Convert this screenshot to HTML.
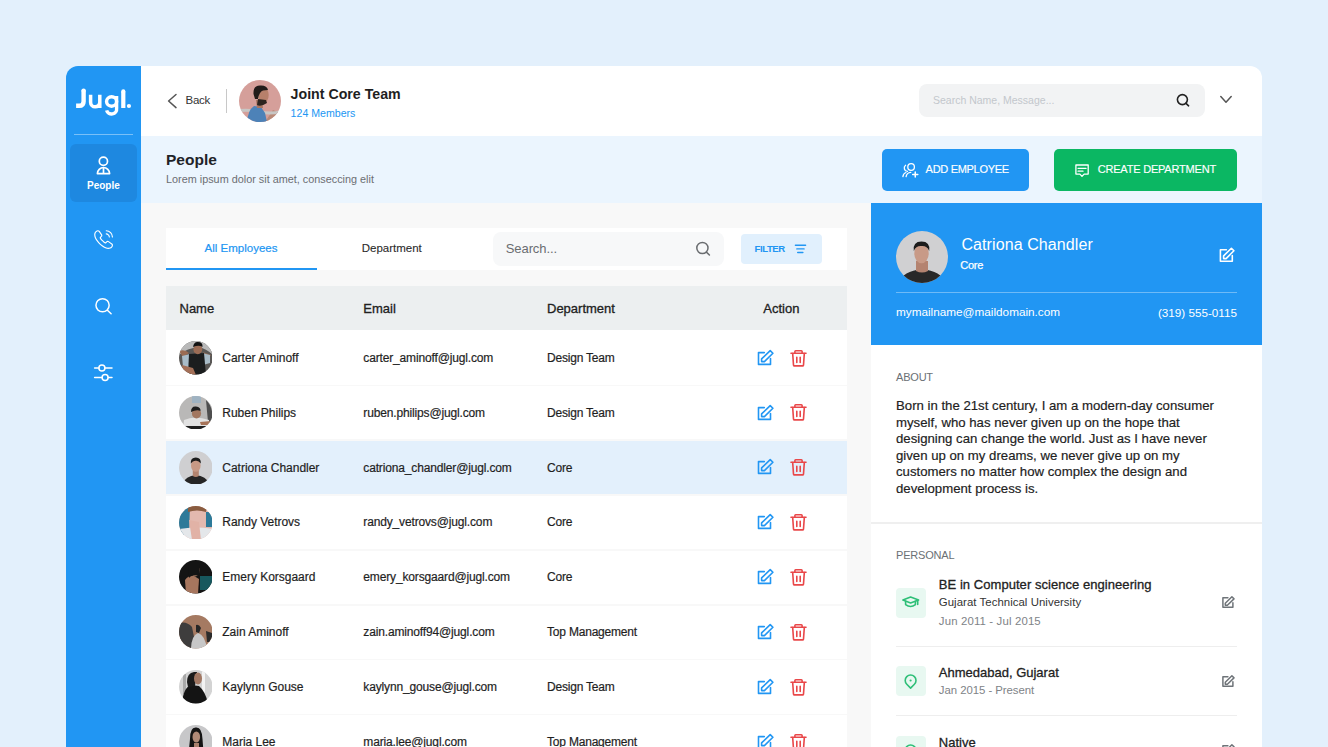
<!DOCTYPE html>
<html><head><meta charset="utf-8"><title>Jugl People</title>
<style>
html,body{margin:0;padding:0;}
body{width:1328px;height:747px;overflow:hidden;position:relative;background:#E3F0FC;font-family:"Liberation Sans", sans-serif;}
.t{position:absolute;white-space:nowrap;}
svg{display:block;}
</style></head><body>
<div style="position:absolute;left:66px;top:66px;width:75px;height:700px;background:#2196F3;border-radius:12px 0 0 0;"></div>
<div style="position:absolute;left:141px;top:66px;width:1121px;height:70px;background:#FFFFFF;border-radius:0 12px 0 0;"></div>
<div style="position:absolute;left:141px;top:136px;width:1121px;height:67px;background:#EBF5FE;"></div>
<div style="position:absolute;left:141px;top:203px;width:730px;height:560px;background:#F8F8F8;"></div>
<div style="position:absolute;left:871px;top:203px;width:391px;height:560px;background:#FFFFFF;"></div>
<div style="position:absolute;left:871px;top:203px;width:391px;height:142px;background:#2196F3;"></div>
<svg style="position:absolute;left:72px;top:82px;" width="64" height="36" viewBox="0 0 64 36" fill="none"><g stroke="#fff" fill="none">
<path d="M11.6 8.4 V19.4 Q11.6 23.8 7.2 23.8 H4.1" stroke-width="4.4" stroke-linecap="butt"/>
<circle cx="11.6" cy="8.6" r="2.2" fill="#fff" stroke="none"/>
<path d="M18.6 12.8 V20.2 A4.6 4.6 0 0 0 27.8 20.2 M27.8 12.8 V26" stroke-width="3.5" stroke-linecap="butt"/>
<ellipse cx="39.6" cy="19.5" rx="5.05" ry="4.7" stroke-width="3.4"/>
<path d="M44.6 14 V26.6 A5.1 4.7 0 0 1 34.6 28.4" stroke-width="3.4" stroke-linecap="butt"/>
<path d="M51.3 9.6 V26" stroke-width="4.2" stroke-linecap="butt"/>
<circle cx="51.3" cy="9.4" r="2.1" fill="#fff" stroke="none"/>
</g><circle cx="56.95" cy="24.0" r="2.1" fill="#fff"/></svg>
<div style="position:absolute;left:74px;top:134px;width:59px;height:1px;background:rgba(255,255,255,0.4);"></div>
<div style="position:absolute;left:70px;top:144px;width:67px;height:58px;background:#1E88E0;border-radius:6px;"></div>
<svg style="position:absolute;left:95px;top:154px;" width="17" height="22" viewBox="0 0 17 22" fill="none"><g stroke="#fff" stroke-width="1.7" fill="none">
<circle cx="8.4" cy="7.2" r="4.1"/>
<path d="M2.4 19.6 A6.1 6.1 0 0 1 14.6 19.6 Z" stroke-linejoin="round"/>
<path d="M8.5 13.8 V19.6"/></g></svg>
<div class="t" style="left:-96.6px;width:400px;text-align:center;top:180.84px;font-size:10px;line-height:10px;color:#FFFFFF;font-weight:700;">People</div>
<svg style="position:absolute;left:92.6px;top:229.2px;" width="21.2" height="21.2" viewBox="0 0 24 24" fill="none"><g stroke="#fff" stroke-width="1.3" fill="none" stroke-linecap="round">
<path d="M21.97 18.33c0 .36-.08.73-.25 1.09-.17.36-.39.7-.68 1.02-.49.54-1.030.93-1.64 1.18-.6.25-1.25.38-1.95.38-1.02 0-2.11-.24-3.26-.73s-2.3-1.15-3.44-1.98a28.75 28.75 0 0 1-3.28-2.8 28.414 28.414 0 0 1-2.79-3.27c-.82-1.14-1.48-2.28-1.96-3.41C2.240 8.670 2 7.58 2 6.54c0-.68.12-1.33.36-1.93.24-.61.62-1.17 1.15-1.67C4.15 2.31 4.85 2 5.59 2c.28 0 .56.06.81.18.26.12.49.3.67.56l2.32 3.27c.18.25.31.48.4.7.09.21.14.42.14.61 0 .24-.07.48-.21.71-.13.23-.32.47-.56.71l-.76.79c-.11.11-.16.24-.16.4 0 .08.01.15.03.23.03.08.06.14.08.2.18.33.49.76.93 1.28.45.52.93 1.05 1.45 1.58.54.53 1.06 1.02 1.59 1.47.52.44.95.74 1.29.92.05.02.11.05.18.08.08.03.16.04.25.04.17 0 .3-.06.41-.17l.76-.75c.25-.25.49-.44.72-.56.23-.14.46-.21.71-.21.19 0 .39.04.61.13.22.09.45.22.7.39l3.31 2.35c.26.18.44.39.55.64.1.25.16.5.16.78Z"/>
<path d="M18.5 9c0-.6-.47-1.52-1.17-2.27-.64-.69-1.49-1.23-2.33-1.23M22 9c0-3.87-3.130-7-7-7"/></g></svg>
<svg style="position:absolute;left:92px;top:295px;" width="22" height="22" viewBox="0 0 22 22" fill="none"><g stroke="#fff" stroke-width="1.5" fill="none" stroke-linecap="round">
<circle cx="10.55" cy="10.25" r="6.6"/><path d="M15.4 15.3 L19.1 18.8"/></g></svg>
<svg style="position:absolute;left:92px;top:362px;" width="22" height="22" viewBox="0 0 22 22" fill="none"><g stroke="#fff" stroke-width="1.5" fill="none" stroke-linecap="round">
<path d="M2.6 6 H6.8 M13.1 6 H20"/><circle cx="9.9" cy="6" r="3"/>
<path d="M2.6 15.5 H10 M16.3 15.5 H20"/><circle cx="13.1" cy="15.5" r="3"/></g></svg>
<svg style="position:absolute;left:164px;top:90px;" width="16" height="22" viewBox="0 0 16 22" fill="none"><path d="M12 4.5 L4.6 11 L12 17.6" stroke="#555" stroke-width="1.5" fill="none" stroke-linecap="round" stroke-linejoin="round"/></svg>
<div class="t" style="left:185.6px;top:94.87px;font-size:11.5px;line-height:11.5px;color:#333333;font-weight:400;letter-spacing:-0.3px;">Back</div>
<div style="position:absolute;left:226px;top:89px;width:1px;height:24px;background:#C8C8C8;"></div>
<svg style="position:absolute;left:238.6px;top:79.9px;" width="42" height="42" viewBox="0 0 42 42" fill="none"><defs><clipPath id="ca"><circle cx="21" cy="21" r="21"/></clipPath></defs>
<g clip-path="url(#ca)"><rect width="42" height="42" fill="#D59F9A"/>
<path d="M26 42 L34 30 Q40 32 42 36 V42Z" fill="#B98A78"/>
<path d="M0 29 Q10 28 20 30 Q32 33 42 30 V33 Q30 36 20 33 Q10 31 0 32Z" fill="#C8C6C4"/>
<path d="M8 42 Q9 30 15 26 L22 27 L26 33 L28 42Z" fill="#4D82B8"/>
<path d="M17 20 L23 20 L24 28 L18 28Z" fill="#A77663"/>
<ellipse cx="24.5" cy="15" rx="5.2" ry="7.8" fill="#B7806B"/>
<path d="M18 25 Q22 27 28 23 L27 20 L19 19Z" fill="#2C2420"/>
<path d="M14.5 14 Q14 5.5 21 5.5 Q28 5 29 10 L24 10.5 Q20 12 19 19 L16 19Z" fill="#221C1A"/></g></svg>
<div class="t" style="left:290.6px;top:86.98px;font-size:14.2px;line-height:14.2px;color:#1F1F1F;font-weight:700;">Joint Core Team</div>
<div class="t" style="left:290.6px;top:107.53px;font-size:10.6px;line-height:10.6px;color:#2196F3;font-weight:400;">124 Members</div>
<div style="position:absolute;left:919px;top:84px;width:286px;height:33px;background:#F2F3F4;border-radius:8px;"></div>
<div class="t" style="left:933px;top:94.61px;font-size:10.5px;line-height:10.5px;color:#C3C7CC;font-weight:400;">Search Name, Message...</div>
<svg style="position:absolute;left:1174px;top:91px;" width="18" height="18" viewBox="0 0 18 18" fill="none"><g stroke="#222" stroke-width="1.6" fill="none" stroke-linecap="round">
<circle cx="8.4" cy="8.6" r="5"/><path d="M12 12.3 L14.6 14.8"/></g></svg>
<svg style="position:absolute;left:1218px;top:93px;" width="16" height="14" viewBox="0 0 16 14" fill="none"><path d="M2.8 3.6 L8 9.2 L13.2 3.6" stroke="#555" stroke-width="1.5" fill="none" stroke-linecap="round" stroke-linejoin="round"/></svg>
<div class="t" style="left:166px;top:152.08px;font-size:15.5px;line-height:15.5px;color:#1F2328;font-weight:700;">People</div>
<div class="t" style="left:166px;top:174.22px;font-size:10.85px;line-height:10.85px;color:#6B6E72;font-weight:400;">Lorem ipsum dolor sit amet, conseccing elit</div>
<div style="position:absolute;left:882px;top:149px;width:147px;height:42px;background:#2196F3;border-radius:5px;"></div>
<svg style="position:absolute;left:900px;top:160px;" width="20" height="20" viewBox="0 0 20 20" fill="none"><g stroke="#fff" stroke-width="1.3" fill="none" stroke-linecap="round">
<circle cx="11.1" cy="7" r="3.3"/>
<path d="M5.6 5.3 A3.4 3.4 0 0 0 7.4 11.4"/>
<path d="M6.1 16.6 Q6.6 12.7 10.8 12.3"/>
<path d="M2.9 16.6 Q3.3 13.4 5.9 12.5"/>
<path d="M12.7 14.4 H17.8 M15.25 11.9 V17" stroke-width="1.5"/></g></svg>
<div class="t" style="left:925.6px;top:164.19px;font-size:11px;line-height:11px;color:#FFFFFF;font-weight:400;letter-spacing:-0.3px;-webkit-text-stroke:0.15px #FFFFFF;">ADD EMPLOYEE</div>
<div style="position:absolute;left:1054px;top:149px;width:183px;height:42px;background:#0BB763;border-radius:5px;"></div>
<svg style="position:absolute;left:1072px;top:160px;" width="20" height="20" viewBox="0 0 20 20" fill="none"><g stroke="#fff" stroke-width="1.3" fill="none" stroke-linecap="round" stroke-linejoin="round">
<path d="M4.6 5 H16.2 V14.1 H12.1 L10 16.4 L7.9 14.1 H3.9 V5 Z"/>
<path d="M6.1 8.4 H14 M6.1 11.2 H11"/></g></svg>
<div class="t" style="left:1097.7px;top:164.29px;font-size:11px;line-height:11px;color:#FFFFFF;font-weight:400;letter-spacing:-0.2px;-webkit-text-stroke:0.15px #FFFFFF;">CREATE DEPARTMENT</div>
<div style="position:absolute;left:166px;top:228px;width:681px;height:41.5px;background:#FFFFFF;"></div>
<div class="t" style="left:204.6px;top:243.27px;font-size:11.5px;line-height:11.5px;color:#2196F3;font-weight:400;-webkit-text-stroke:0.2px #2196F3;">All Employees</div>
<div style="position:absolute;left:166px;top:267.7px;width:151px;height:2px;background:#2196F3;"></div>
<div class="t" style="left:361.7px;top:243.27px;font-size:11.5px;line-height:11.5px;color:#2B2B2B;font-weight:400;-webkit-text-stroke:0.1px #2B2B2B;">Department</div>
<div style="position:absolute;left:493px;top:232px;width:231px;height:34px;background:#F7F8F9;border-radius:8px;"></div>
<div class="t" style="left:505.8px;top:242.30px;font-size:13px;line-height:13px;color:#6A6D71;font-weight:400;letter-spacing:-0.1px;">Search...</div>
<svg style="position:absolute;left:694px;top:240px;" width="18" height="18" viewBox="0 0 18 18" fill="none"><g stroke="#6A6D70" stroke-width="1.5" fill="none" stroke-linecap="round">
<circle cx="8.4" cy="8" r="5.6"/><path d="M12.4 12.1 L15.4 15"/></g></svg>
<div style="position:absolute;left:741px;top:234px;width:81px;height:30px;background:#E1F0FD;border-radius:4px;"></div>
<div class="t" style="left:754.6px;top:243.87px;font-size:9.6px;line-height:9.6px;color:#2196F3;font-weight:700;letter-spacing:-0.45px;">FILTER</div>
<svg style="position:absolute;left:792px;top:242px;" width="16" height="14" viewBox="0 0 16 14" fill="none"><g stroke="#2196F3" stroke-width="1.4" fill="none" stroke-linecap="round">
<path d="M3.4 3.2 H13.6 M4.8 6.9 H12.1 M5.7 10.5 H10.9"/></g></svg>
<div style="position:absolute;left:166px;top:286px;width:681px;height:44px;background:#ECEFF0;"></div>
<div class="t" style="left:179.5px;top:301.50px;font-size:13px;line-height:13px;color:#212121;font-weight:400;-webkit-text-stroke:0.3px #212121;">Name</div>
<div class="t" style="left:363.3px;top:301.50px;font-size:13px;line-height:13px;color:#212121;font-weight:400;-webkit-text-stroke:0.3px #212121;">Email</div>
<div class="t" style="left:547px;top:301.50px;font-size:13px;line-height:13px;color:#212121;font-weight:400;-webkit-text-stroke:0.3px #212121;">Department</div>
<div class="t" style="left:763.3px;top:301.50px;font-size:13px;line-height:13px;color:#212121;font-weight:400;-webkit-text-stroke:0.3px #212121;">Action</div>
<div style="position:absolute;left:166px;top:330.0px;width:681px;height:54.6px;background:#FFFFFF;"></div>
<svg style="position:absolute;left:178.8px;top:341.0px;" width="33.6" height="33.6" viewBox="0 0 33.6 33.6" fill="none"><defs><clipPath id="c0"><circle cx="16.8" cy="16.8" r="16.8"/></clipPath></defs>
<g clip-path="url(#c0)"><rect width="34" height="34" fill="#5A5856"/>
<path d="M0 0 H34 V14 Q28 8 20 6 Q8 7 0 14Z" fill="#B9B9B9"/>
<path d="M0 10 Q6 8 10 12 L4 16 Z" fill="#9A6B52"/><path d="M24 11 L32 14 L29 18Z" fill="#8E6A55"/>
<path d="M3 15 L11 13 L12 26 L4 26Z" fill="#A9BCC8"/><path d="M23 12 L31 14 L31 22 L24 24Z" fill="#A9BCC8"/>
<path d="M10 13 L25 12 L27 34 L9 34Z" fill="#1B1D1E"/>
<path d="M3 24 L14 27 L17 34 L4 34Z" fill="#A47058"/>
<ellipse cx="18.8" cy="8.2" rx="4.4" ry="5" fill="#9B6C55"/>
<path d="M14 6 Q15 0.5 19 1 Q24 1 23.5 6 Q20 3.5 14 6Z" fill="#121212"/></g></svg>
<div class="t" style="left:222.3px;top:351.94px;font-size:12px;line-height:12px;color:#1F1F1F;font-weight:400;letter-spacing:-0.02px;-webkit-text-stroke:0.2px #1F1F1F;">Carter Aminoff</div>
<div class="t" style="left:363.3px;top:351.94px;font-size:12px;line-height:12px;color:#1F1F1F;font-weight:400;letter-spacing:-0.15px;-webkit-text-stroke:0.2px #1F1F1F;">carter_aminoff@jugl.com</div>
<div class="t" style="left:547px;top:351.94px;font-size:12px;line-height:12px;color:#1F1F1F;font-weight:400;letter-spacing:-0.2px;-webkit-text-stroke:0.2px #1F1F1F;">Design Team</div>
<svg style="position:absolute;left:756px;top:348.7px;" width="19" height="19" viewBox="0 0 19 19" fill="none"><g stroke="#2196F3" stroke-width="1.6" fill="none" stroke-linejoin="round" stroke-linecap="round">
<path d="M8.3 3.6 H2.5 V15.4 H14.5 V9.6"/><path d="M5.6 12.6 V9.9 L14.2 1.6 L16.9 4.3 L8.4 12.6 Z"/></g></svg>
<svg style="position:absolute;left:788px;top:347.6px;" width="21" height="20" viewBox="0 0 21 20" fill="none"><g stroke="#E9484A" stroke-width="1.6" fill="none" stroke-linejoin="round" stroke-linecap="round">
<path d="M3 5.3 H18.0"/><path d="M6.9 5.2 V3.5 Q6.9 2.8 7.6 2.8 H13.4 Q14.1 2.8 14.1 3.5 V5.2"/>
<path d="M4.7 5.6 L5.5 17.1 Q5.6 17.9 6.4 17.9 H14.6 Q15.4 17.9 15.5 17.1 L16.3 5.6"/>
<path d="M8.8 9.2 V14.4 M12.2 9.2 V14.4"/></g></svg>
<div style="position:absolute;left:166px;top:386.15px;width:681px;height:53.3px;background:#FFFFFF;"></div>
<svg style="position:absolute;left:178.8px;top:395.85px;" width="33.6" height="33.6" viewBox="0 0 33.6 33.6" fill="none"><defs><clipPath id="c1"><circle cx="16.8" cy="16.8" r="16.8"/></clipPath></defs>
<g clip-path="url(#c1)"><rect width="34" height="34" fill="#B9B8B7"/>
<rect x="13" y="0" width="9" height="7" fill="#9FB3C2"/>
<path d="M27 4 Q34 10 34 26 L29 26 Z" fill="#4E4E4E"/>
<path d="M5 24 Q16 19 30 24 L30 34 L4 34Z" fill="#E2E2E2"/>
<rect x="5" y="30" width="25" height="4" fill="#1E1E1E"/>
<ellipse cx="17.5" cy="17.5" rx="4.6" ry="5" fill="#A27760"/>
<path d="M12 16 Q12 10 17 10.5 Q22 11 21.5 15 Q18 13 12 16Z" fill="#1E1E1E"/>
<path d="M21 26 L32 25 L31 29 L22 29Z" fill="#A77459"/></g></svg>
<div class="t" style="left:222.3px;top:406.79px;font-size:12px;line-height:12px;color:#1F1F1F;font-weight:400;letter-spacing:-0.02px;-webkit-text-stroke:0.2px #1F1F1F;">Ruben Philips</div>
<div class="t" style="left:363.3px;top:406.79px;font-size:12px;line-height:12px;color:#1F1F1F;font-weight:400;letter-spacing:-0.15px;-webkit-text-stroke:0.2px #1F1F1F;">ruben.philips@jugl.com</div>
<div class="t" style="left:547px;top:406.79px;font-size:12px;line-height:12px;color:#1F1F1F;font-weight:400;letter-spacing:-0.2px;-webkit-text-stroke:0.2px #1F1F1F;">Design Team</div>
<svg style="position:absolute;left:756px;top:403.55px;" width="19" height="19" viewBox="0 0 19 19" fill="none"><g stroke="#2196F3" stroke-width="1.6" fill="none" stroke-linejoin="round" stroke-linecap="round">
<path d="M8.3 3.6 H2.5 V15.4 H14.5 V9.6"/><path d="M5.6 12.6 V9.9 L14.2 1.6 L16.9 4.3 L8.4 12.6 Z"/></g></svg>
<svg style="position:absolute;left:788px;top:402.45px;" width="21" height="20" viewBox="0 0 21 20" fill="none"><g stroke="#E9484A" stroke-width="1.6" fill="none" stroke-linejoin="round" stroke-linecap="round">
<path d="M3 5.3 H18.0"/><path d="M6.9 5.2 V3.5 Q6.9 2.8 7.6 2.8 H13.4 Q14.1 2.8 14.1 3.5 V5.2"/>
<path d="M4.7 5.6 L5.5 17.1 Q5.6 17.9 6.4 17.9 H14.6 Q15.4 17.9 15.5 17.1 L16.3 5.6"/>
<path d="M8.8 9.2 V14.4 M12.2 9.2 V14.4"/></g></svg>
<div style="position:absolute;left:166px;top:441.0px;width:681px;height:53.3px;background:#E3F0FC;"></div>
<svg style="position:absolute;left:178.8px;top:450.7px;" width="33.6" height="33.6" viewBox="0 0 33.6 33.6" fill="none"><defs><clipPath id="c2"><circle cx="16.8" cy="16.8" r="16.8"/></clipPath></defs>
<g clip-path="url(#c2)"><rect width="34" height="34" fill="#CFCFD1"/>
<path d="M3 34 Q6 25 16.8 24 Q27.6 25 31 34Z" fill="#262626"/>
<path d="M13.8 19 L19.8 19 L19.8 25 Q16.8 27 13.8 25Z" fill="#B3846F"/>
<ellipse cx="16.8" cy="14.5" rx="4.8" ry="6.3" fill="#C79985"/>
<path d="M11.8 12.5 Q11.3 6.5 16.8 6.5 Q22.3 6.5 21.8 12.5 Q19.8 9.5 16.8 9.8 Q13.8 9.5 11.8 12.5Z" fill="#1C1C1C"/></g></svg>
<div class="t" style="left:222.3px;top:461.64px;font-size:12px;line-height:12px;color:#1F1F1F;font-weight:400;letter-spacing:-0.02px;-webkit-text-stroke:0.2px #1F1F1F;">Catriona Chandler</div>
<div class="t" style="left:363.3px;top:461.64px;font-size:12px;line-height:12px;color:#1F1F1F;font-weight:400;letter-spacing:-0.15px;-webkit-text-stroke:0.2px #1F1F1F;">catriona_chandler@jugl.com</div>
<div class="t" style="left:547px;top:461.64px;font-size:12px;line-height:12px;color:#1F1F1F;font-weight:400;letter-spacing:-0.2px;-webkit-text-stroke:0.2px #1F1F1F;">Core</div>
<svg style="position:absolute;left:756px;top:458.4px;" width="19" height="19" viewBox="0 0 19 19" fill="none"><g stroke="#2196F3" stroke-width="1.6" fill="none" stroke-linejoin="round" stroke-linecap="round">
<path d="M8.3 3.6 H2.5 V15.4 H14.5 V9.6"/><path d="M5.6 12.6 V9.9 L14.2 1.6 L16.9 4.3 L8.4 12.6 Z"/></g></svg>
<svg style="position:absolute;left:788px;top:457.3px;" width="21" height="20" viewBox="0 0 21 20" fill="none"><g stroke="#E9484A" stroke-width="1.6" fill="none" stroke-linejoin="round" stroke-linecap="round">
<path d="M3 5.3 H18.0"/><path d="M6.9 5.2 V3.5 Q6.9 2.8 7.6 2.8 H13.4 Q14.1 2.8 14.1 3.5 V5.2"/>
<path d="M4.7 5.6 L5.5 17.1 Q5.6 17.9 6.4 17.9 H14.6 Q15.4 17.9 15.5 17.1 L16.3 5.6"/>
<path d="M8.8 9.2 V14.4 M12.2 9.2 V14.4"/></g></svg>
<div style="position:absolute;left:166px;top:495.85px;width:681px;height:53.3px;background:#FFFFFF;"></div>
<svg style="position:absolute;left:178.8px;top:505.55px;" width="33.6" height="33.6" viewBox="0 0 33.6 33.6" fill="none"><defs><clipPath id="c3"><circle cx="16.8" cy="16.8" r="16.8"/></clipPath></defs>
<g clip-path="url(#c3)"><rect width="34" height="34" fill="#E3B9AF"/>
<path d="M0 0 H11 L10 29 L0 29Z" fill="#2D7A99"/>
<path d="M27 6 L34 6 L34 21 L27 21Z" fill="#2D7A99"/>
<path d="M9 0 H28 L27 6 Q18 3 9 6Z" fill="#8A5C40"/>
<path d="M0 23 Q17 20 34 23 V34 H0Z" fill="#E4E7EA"/>
<path d="M10 14 L20 16 L22 34 L13 34Z" fill="#E1B2A6"/></g></svg>
<div class="t" style="left:222.3px;top:516.49px;font-size:12px;line-height:12px;color:#1F1F1F;font-weight:400;letter-spacing:-0.02px;-webkit-text-stroke:0.2px #1F1F1F;">Randy Vetrovs</div>
<div class="t" style="left:363.3px;top:516.49px;font-size:12px;line-height:12px;color:#1F1F1F;font-weight:400;letter-spacing:-0.15px;-webkit-text-stroke:0.2px #1F1F1F;">randy_vetrovs@jugl.com</div>
<div class="t" style="left:547px;top:516.49px;font-size:12px;line-height:12px;color:#1F1F1F;font-weight:400;letter-spacing:-0.2px;-webkit-text-stroke:0.2px #1F1F1F;">Core</div>
<svg style="position:absolute;left:756px;top:513.25px;" width="19" height="19" viewBox="0 0 19 19" fill="none"><g stroke="#2196F3" stroke-width="1.6" fill="none" stroke-linejoin="round" stroke-linecap="round">
<path d="M8.3 3.6 H2.5 V15.4 H14.5 V9.6"/><path d="M5.6 12.6 V9.9 L14.2 1.6 L16.9 4.3 L8.4 12.6 Z"/></g></svg>
<svg style="position:absolute;left:788px;top:512.15px;" width="21" height="20" viewBox="0 0 21 20" fill="none"><g stroke="#E9484A" stroke-width="1.6" fill="none" stroke-linejoin="round" stroke-linecap="round">
<path d="M3 5.3 H18.0"/><path d="M6.9 5.2 V3.5 Q6.9 2.8 7.6 2.8 H13.4 Q14.1 2.8 14.1 3.5 V5.2"/>
<path d="M4.7 5.6 L5.5 17.1 Q5.6 17.9 6.4 17.9 H14.6 Q15.4 17.9 15.5 17.1 L16.3 5.6"/>
<path d="M8.8 9.2 V14.4 M12.2 9.2 V14.4"/></g></svg>
<div style="position:absolute;left:166px;top:550.7px;width:681px;height:53.3px;background:#FFFFFF;"></div>
<svg style="position:absolute;left:178.8px;top:560.4px;" width="33.6" height="33.6" viewBox="0 0 33.6 33.6" fill="none"><defs><clipPath id="c4"><circle cx="16.8" cy="16.8" r="16.8"/></clipPath></defs>
<g clip-path="url(#c4)"><rect width="34" height="34" fill="#141414"/>
<rect x="21" y="16" width="13" height="14" fill="#17585E"/>
<path d="M6 20 Q10 15 15 16 L20 19 L19 34 L7 34Z" fill="#A7765E"/>
<ellipse cx="16" cy="10.5" rx="4.6" ry="6" fill="#A87A62"/>
<path d="M9 6 Q13 -1 20 3 L21 16 Q13 14 10 18Z" fill="#141414"/></g></svg>
<div class="t" style="left:222.3px;top:571.34px;font-size:12px;line-height:12px;color:#1F1F1F;font-weight:400;letter-spacing:-0.02px;-webkit-text-stroke:0.2px #1F1F1F;">Emery Korsgaard</div>
<div class="t" style="left:363.3px;top:571.34px;font-size:12px;line-height:12px;color:#1F1F1F;font-weight:400;letter-spacing:-0.15px;-webkit-text-stroke:0.2px #1F1F1F;">emery_korsgaard@jugl.com</div>
<div class="t" style="left:547px;top:571.34px;font-size:12px;line-height:12px;color:#1F1F1F;font-weight:400;letter-spacing:-0.2px;-webkit-text-stroke:0.2px #1F1F1F;">Core</div>
<svg style="position:absolute;left:756px;top:568.1px;" width="19" height="19" viewBox="0 0 19 19" fill="none"><g stroke="#2196F3" stroke-width="1.6" fill="none" stroke-linejoin="round" stroke-linecap="round">
<path d="M8.3 3.6 H2.5 V15.4 H14.5 V9.6"/><path d="M5.6 12.6 V9.9 L14.2 1.6 L16.9 4.3 L8.4 12.6 Z"/></g></svg>
<svg style="position:absolute;left:788px;top:567.0px;" width="21" height="20" viewBox="0 0 21 20" fill="none"><g stroke="#E9484A" stroke-width="1.6" fill="none" stroke-linejoin="round" stroke-linecap="round">
<path d="M3 5.3 H18.0"/><path d="M6.9 5.2 V3.5 Q6.9 2.8 7.6 2.8 H13.4 Q14.1 2.8 14.1 3.5 V5.2"/>
<path d="M4.7 5.6 L5.5 17.1 Q5.6 17.9 6.4 17.9 H14.6 Q15.4 17.9 15.5 17.1 L16.3 5.6"/>
<path d="M8.8 9.2 V14.4 M12.2 9.2 V14.4"/></g></svg>
<div style="position:absolute;left:166px;top:605.55px;width:681px;height:53.3px;background:#FFFFFF;"></div>
<svg style="position:absolute;left:178.8px;top:615.25px;" width="33.6" height="33.6" viewBox="0 0 33.6 33.6" fill="none"><defs><clipPath id="c5"><circle cx="16.8" cy="16.8" r="16.8"/></clipPath></defs>
<g clip-path="url(#c5)"><rect width="34" height="34" fill="#A57A62"/>
<path d="M0 8 Q8 6 13 12 L15 22 L12 34 L0 34Z" fill="#3E3D3D"/>
<path d="M12 34 Q12 21 19 18 Q26 20 28 34Z" fill="#C7C7C7"/>
<path d="M27 16 L33 18 L33 27 L28 27Z" fill="#2B2B2B"/>
<path d="M17 10 Q20 9 22 13 L20 18 L17 17Z" fill="#262626"/></g></svg>
<div class="t" style="left:222.3px;top:626.19px;font-size:12px;line-height:12px;color:#1F1F1F;font-weight:400;letter-spacing:-0.02px;-webkit-text-stroke:0.2px #1F1F1F;">Zain Aminoff</div>
<div class="t" style="left:363.3px;top:626.19px;font-size:12px;line-height:12px;color:#1F1F1F;font-weight:400;letter-spacing:-0.15px;-webkit-text-stroke:0.2px #1F1F1F;">zain.aminoff94@jugl.com</div>
<div class="t" style="left:547px;top:626.19px;font-size:12px;line-height:12px;color:#1F1F1F;font-weight:400;letter-spacing:-0.2px;-webkit-text-stroke:0.2px #1F1F1F;">Top Management</div>
<svg style="position:absolute;left:756px;top:622.95px;" width="19" height="19" viewBox="0 0 19 19" fill="none"><g stroke="#2196F3" stroke-width="1.6" fill="none" stroke-linejoin="round" stroke-linecap="round">
<path d="M8.3 3.6 H2.5 V15.4 H14.5 V9.6"/><path d="M5.6 12.6 V9.9 L14.2 1.6 L16.9 4.3 L8.4 12.6 Z"/></g></svg>
<svg style="position:absolute;left:788px;top:621.85px;" width="21" height="20" viewBox="0 0 21 20" fill="none"><g stroke="#E9484A" stroke-width="1.6" fill="none" stroke-linejoin="round" stroke-linecap="round">
<path d="M3 5.3 H18.0"/><path d="M6.9 5.2 V3.5 Q6.9 2.8 7.6 2.8 H13.4 Q14.1 2.8 14.1 3.5 V5.2"/>
<path d="M4.7 5.6 L5.5 17.1 Q5.6 17.9 6.4 17.9 H14.6 Q15.4 17.9 15.5 17.1 L16.3 5.6"/>
<path d="M8.8 9.2 V14.4 M12.2 9.2 V14.4"/></g></svg>
<div style="position:absolute;left:166px;top:660.4px;width:681px;height:53.3px;background:#FFFFFF;"></div>
<svg style="position:absolute;left:178.8px;top:670.1px;" width="33.6" height="33.6" viewBox="0 0 33.6 33.6" fill="none"><defs><clipPath id="c6"><circle cx="16.8" cy="16.8" r="16.8"/></clipPath></defs>
<g clip-path="url(#c6)"><rect width="34" height="34" fill="#D3D3D3"/>
<rect x="23" y="0" width="3" height="34" fill="#F2F2F2"/><rect x="4" y="4" width="3" height="20" fill="#A8A8A8"/>
<path d="M3 34 Q4 18 12 15 L20 16 Q27 22 29 34Z" fill="#141414"/>
<path d="M8 12 Q8 3 15 2 L18 2 L16 16 L9 17Z" fill="#1A1A1A"/>
<ellipse cx="19" cy="8.5" rx="4" ry="6" fill="#A17762"/></g></svg>
<div class="t" style="left:222.3px;top:681.04px;font-size:12px;line-height:12px;color:#1F1F1F;font-weight:400;letter-spacing:-0.02px;-webkit-text-stroke:0.2px #1F1F1F;">Kaylynn Gouse</div>
<div class="t" style="left:363.3px;top:681.04px;font-size:12px;line-height:12px;color:#1F1F1F;font-weight:400;letter-spacing:-0.15px;-webkit-text-stroke:0.2px #1F1F1F;">kaylynn_gouse@jugl.com</div>
<div class="t" style="left:547px;top:681.04px;font-size:12px;line-height:12px;color:#1F1F1F;font-weight:400;letter-spacing:-0.2px;-webkit-text-stroke:0.2px #1F1F1F;">Design Team</div>
<svg style="position:absolute;left:756px;top:677.8px;" width="19" height="19" viewBox="0 0 19 19" fill="none"><g stroke="#2196F3" stroke-width="1.6" fill="none" stroke-linejoin="round" stroke-linecap="round">
<path d="M8.3 3.6 H2.5 V15.4 H14.5 V9.6"/><path d="M5.6 12.6 V9.9 L14.2 1.6 L16.9 4.3 L8.4 12.6 Z"/></g></svg>
<svg style="position:absolute;left:788px;top:676.7px;" width="21" height="20" viewBox="0 0 21 20" fill="none"><g stroke="#E9484A" stroke-width="1.6" fill="none" stroke-linejoin="round" stroke-linecap="round">
<path d="M3 5.3 H18.0"/><path d="M6.9 5.2 V3.5 Q6.9 2.8 7.6 2.8 H13.4 Q14.1 2.8 14.1 3.5 V5.2"/>
<path d="M4.7 5.6 L5.5 17.1 Q5.6 17.9 6.4 17.9 H14.6 Q15.4 17.9 15.5 17.1 L16.3 5.6"/>
<path d="M8.8 9.2 V14.4 M12.2 9.2 V14.4"/></g></svg>
<div style="position:absolute;left:166px;top:715.25px;width:681px;height:53.3px;background:#FFFFFF;"></div>
<svg style="position:absolute;left:178.8px;top:724.95px;" width="33.6" height="33.6" viewBox="0 0 33.6 33.6" fill="none"><defs><clipPath id="c7"><circle cx="16.8" cy="16.8" r="16.8"/></clipPath></defs>
<g clip-path="url(#c7)"><rect width="34" height="34" fill="#C7C7C9"/>
<path d="M11 14 Q11 2 17 2.5 Q23 2 23.5 14 L25 34 L9 34Z" fill="#141414"/>
<rect x="15" y="18" width="5" height="16" fill="#A9806D"/>
<ellipse cx="17.3" cy="12" rx="3.8" ry="5.6" fill="#B08A77"/></g></svg>
<div class="t" style="left:222.3px;top:735.89px;font-size:12px;line-height:12px;color:#1F1F1F;font-weight:400;letter-spacing:-0.02px;-webkit-text-stroke:0.2px #1F1F1F;">Maria Lee</div>
<div class="t" style="left:363.3px;top:735.89px;font-size:12px;line-height:12px;color:#1F1F1F;font-weight:400;letter-spacing:-0.15px;-webkit-text-stroke:0.2px #1F1F1F;">maria.lee@jugl.com</div>
<div class="t" style="left:547px;top:735.89px;font-size:12px;line-height:12px;color:#1F1F1F;font-weight:400;letter-spacing:-0.2px;-webkit-text-stroke:0.2px #1F1F1F;">Top Management</div>
<svg style="position:absolute;left:756px;top:732.65px;" width="19" height="19" viewBox="0 0 19 19" fill="none"><g stroke="#2196F3" stroke-width="1.6" fill="none" stroke-linejoin="round" stroke-linecap="round">
<path d="M8.3 3.6 H2.5 V15.4 H14.5 V9.6"/><path d="M5.6 12.6 V9.9 L14.2 1.6 L16.9 4.3 L8.4 12.6 Z"/></g></svg>
<svg style="position:absolute;left:788px;top:731.55px;" width="21" height="20" viewBox="0 0 21 20" fill="none"><g stroke="#E9484A" stroke-width="1.6" fill="none" stroke-linejoin="round" stroke-linecap="round">
<path d="M3 5.3 H18.0"/><path d="M6.9 5.2 V3.5 Q6.9 2.8 7.6 2.8 H13.4 Q14.1 2.8 14.1 3.5 V5.2"/>
<path d="M4.7 5.6 L5.5 17.1 Q5.6 17.9 6.4 17.9 H14.6 Q15.4 17.9 15.5 17.1 L16.3 5.6"/>
<path d="M8.8 9.2 V14.4 M12.2 9.2 V14.4"/></g></svg>
<svg style="position:absolute;left:895.5px;top:231px;" width="52" height="52" viewBox="0 0 52 52" fill="none"><defs><clipPath id="cp"><circle cx="26" cy="26" r="26"/></clipPath></defs>
<g clip-path="url(#cp)"><rect width="52" height="52" fill="#D0D0D2"/>
<path d="M2 52 Q7 40 26 38 Q45 40 50 52Z" fill="#282828"/>
<path d="M20 30 L32 30 L32 40 Q26 43 20 40Z" fill="#B48370"/>
<ellipse cx="25.5" cy="22.5" rx="7.2" ry="9.8" fill="#C89A87"/>
<path d="M17.8 20 Q16.5 10.5 25.5 10.5 Q34.5 10.5 33.2 20 Q31 14.5 25.5 15 Q20 14.5 17.8 20Z" fill="#1C1C1C"/></g></svg>
<div class="t" style="left:961.4px;top:237.06px;font-size:16px;line-height:16px;color:#FFFFFF;font-weight:400;letter-spacing:0.1px;">Catriona Chandler</div>
<div class="t" style="left:960.2px;top:260.29px;font-size:11px;line-height:11px;color:#FFFFFF;font-weight:400;letter-spacing:-0.2px;-webkit-text-stroke:0.25px #FFFFFF;">Core</div>
<svg style="position:absolute;left:1216px;top:244px;" width="21" height="21" viewBox="0 0 21 21" fill="none"><g stroke="#fff" stroke-width="1.6" fill="none" stroke-linejoin="round" stroke-linecap="round">
<path d="M10.4 5.8 H4.4 V17.3 H16.3 V11.6"/><path d="M7.6 14.6 V11.9 L15.4 4.3 L17.9 6.8 L10.1 14.6 Z"/></g></svg>
<div style="position:absolute;left:896px;top:292px;width:341px;height:1px;background:rgba(255,255,255,0.35);"></div>
<div class="t" style="left:896px;top:306.45px;font-size:11.75px;line-height:11.75px;color:#FFFFFF;font-weight:400;">mymailname@maildomain.com</div>
<div class="t" style="right:91px;top:306.70px;font-size:11.7px;line-height:11.7px;color:#FFFFFF;font-weight:400;">(319) 555-0115</div>
<div class="t" style="left:896px;top:371.89px;font-size:11px;line-height:11px;color:#6B7075;font-weight:400;letter-spacing:-0.2px;">ABOUT</div>
<div class="t" style="left:896px;top:399.43px;font-size:13.2px;line-height:13.2px;color:#222222;font-weight:400;-webkit-text-stroke:0.18px #222222;">Born in the 21st century, I am a modern-day consumer</div>
<div class="t" style="left:896px;top:415.93px;font-size:13.2px;line-height:13.2px;color:#222222;font-weight:400;-webkit-text-stroke:0.18px #222222;">myself, who has never given up on the hope that</div>
<div class="t" style="left:896px;top:432.43px;font-size:13.2px;line-height:13.2px;color:#222222;font-weight:400;-webkit-text-stroke:0.18px #222222;">designing can change the world. Just as I have never</div>
<div class="t" style="left:896px;top:448.93px;font-size:13.2px;line-height:13.2px;color:#222222;font-weight:400;-webkit-text-stroke:0.18px #222222;">given up on my dreams, we never give up on my</div>
<div class="t" style="left:896px;top:465.43px;font-size:13.2px;line-height:13.2px;color:#222222;font-weight:400;-webkit-text-stroke:0.18px #222222;">customers no matter how complex the design and</div>
<div class="t" style="left:896px;top:481.93px;font-size:13.2px;line-height:13.2px;color:#222222;font-weight:400;-webkit-text-stroke:0.18px #222222;">development process is.</div>
<div style="position:absolute;left:871px;top:521.5px;width:391px;height:2px;background:#EFEFEF;"></div>
<div class="t" style="left:896px;top:549.99px;font-size:11px;line-height:11px;color:#6B7075;font-weight:400;letter-spacing:-0.2px;">PERSONAL</div>
<div style="position:absolute;left:896px;top:587.5px;width:30px;height:30px;background:#E8F8F1;border-radius:4px;"></div>
<svg style="position:absolute;left:900px;top:591px;" width="22" height="22" viewBox="0 0 22 22" fill="none"><g stroke="#2EBF77" stroke-width="1.6" fill="none" stroke-linejoin="round" stroke-linecap="round">
<path d="M2.9 9 L10.6 6.1 L18.6 9 L10.6 12 Z"/>
<path d="M5.6 10.4 V13.6 Q10.6 17.4 15.4 13.6 V10.4"/><path d="M17.7 9.4 V13.4"/></g></svg>
<div class="t" style="left:938.8px;top:577.90px;font-size:13px;line-height:13px;color:#222222;font-weight:400;letter-spacing:0.05px;-webkit-text-stroke:0.3px #222222;">BE in Computer science engineering</div>
<div class="t" style="left:938.8px;top:596.95px;font-size:11.4px;line-height:11.4px;color:#333333;font-weight:400;letter-spacing:0.05px;">Gujarat Technical University</div>
<div class="t" style="left:938.8px;top:615.55px;font-size:11.4px;line-height:11.4px;color:#808387;font-weight:400;letter-spacing:0.15px;">Jun 2011 - Jul 2015</div>
<svg style="position:absolute;left:1220px;top:594.3px;" width="17" height="17" viewBox="0 0 17 17" fill="none"><g stroke="#6F7479" stroke-width="1.5" fill="none" stroke-linejoin="round" stroke-linecap="round">
<path d="M7.9 3.8 H2.9 V13.3 H12.9 V8.8"/><path d="M5.3 11.2 V9.2 L11.9 2.8 L14 4.9 L7.4 11.2 Z"/></g></svg>
<div style="position:absolute;left:896px;top:645.6px;width:341px;height:1px;background:#EEEEEE;"></div>
<div style="position:absolute;left:896px;top:666px;width:30px;height:30px;background:#E8F8F1;border-radius:4px;"></div>
<svg style="position:absolute;left:900px;top:670px;" width="22" height="22" viewBox="0 0 22 22" fill="none"><g stroke="#2EBF77" stroke-width="1.6" fill="none" stroke-linejoin="round">
<path d="M10.6 18.1 L6.8 14.3 A5.4 5.4 0 1 1 14.4 14.3 Z"/></g><circle cx="10.6" cy="10.5" r="1.1" fill="#2EBF77"/></svg>
<div class="t" style="left:938.8px;top:665.50px;font-size:13px;line-height:13px;color:#222222;font-weight:400;-webkit-text-stroke:0.3px #222222;">Ahmedabad, Gujarat</div>
<div class="t" style="left:938.8px;top:685.05px;font-size:11.4px;line-height:11.4px;color:#808387;font-weight:400;letter-spacing:-0.05px;">Jan 2015 - Present</div>
<svg style="position:absolute;left:1220px;top:672.6px;" width="17" height="17" viewBox="0 0 17 17" fill="none"><g stroke="#6F7479" stroke-width="1.5" fill="none" stroke-linejoin="round" stroke-linecap="round">
<path d="M7.9 3.8 H2.9 V13.3 H12.9 V8.8"/><path d="M5.3 11.2 V9.2 L11.9 2.8 L14 4.9 L7.4 11.2 Z"/></g></svg>
<div style="position:absolute;left:896px;top:715.3px;width:341px;height:1px;background:#EEEEEE;"></div>
<div style="position:absolute;left:896px;top:735.7px;width:30px;height:30px;background:#E8F8F1;border-radius:4px;"></div>
<svg style="position:absolute;left:900px;top:739.7px;" width="22" height="22" viewBox="0 0 22 22" fill="none"><g stroke="#2EBF77" stroke-width="1.6" fill="none" stroke-linejoin="round">
<path d="M10.6 18.1 L6.8 14.3 A5.4 5.4 0 1 1 14.4 14.3 Z"/></g></svg>
<div class="t" style="left:938.8px;top:735.60px;font-size:13px;line-height:13px;color:#222222;font-weight:400;-webkit-text-stroke:0.3px #222222;">Native</div>
<svg style="position:absolute;left:1220px;top:742px;" width="17" height="17" viewBox="0 0 17 17" fill="none"><g stroke="#6F7479" stroke-width="1.5" fill="none" stroke-linejoin="round" stroke-linecap="round">
<path d="M7.9 3.8 H2.9 V13.3 H12.9 V8.8"/><path d="M5.3 11.2 V9.2 L11.9 2.8 L14 4.9 L7.4 11.2 Z"/></g></svg>
</body></html>
